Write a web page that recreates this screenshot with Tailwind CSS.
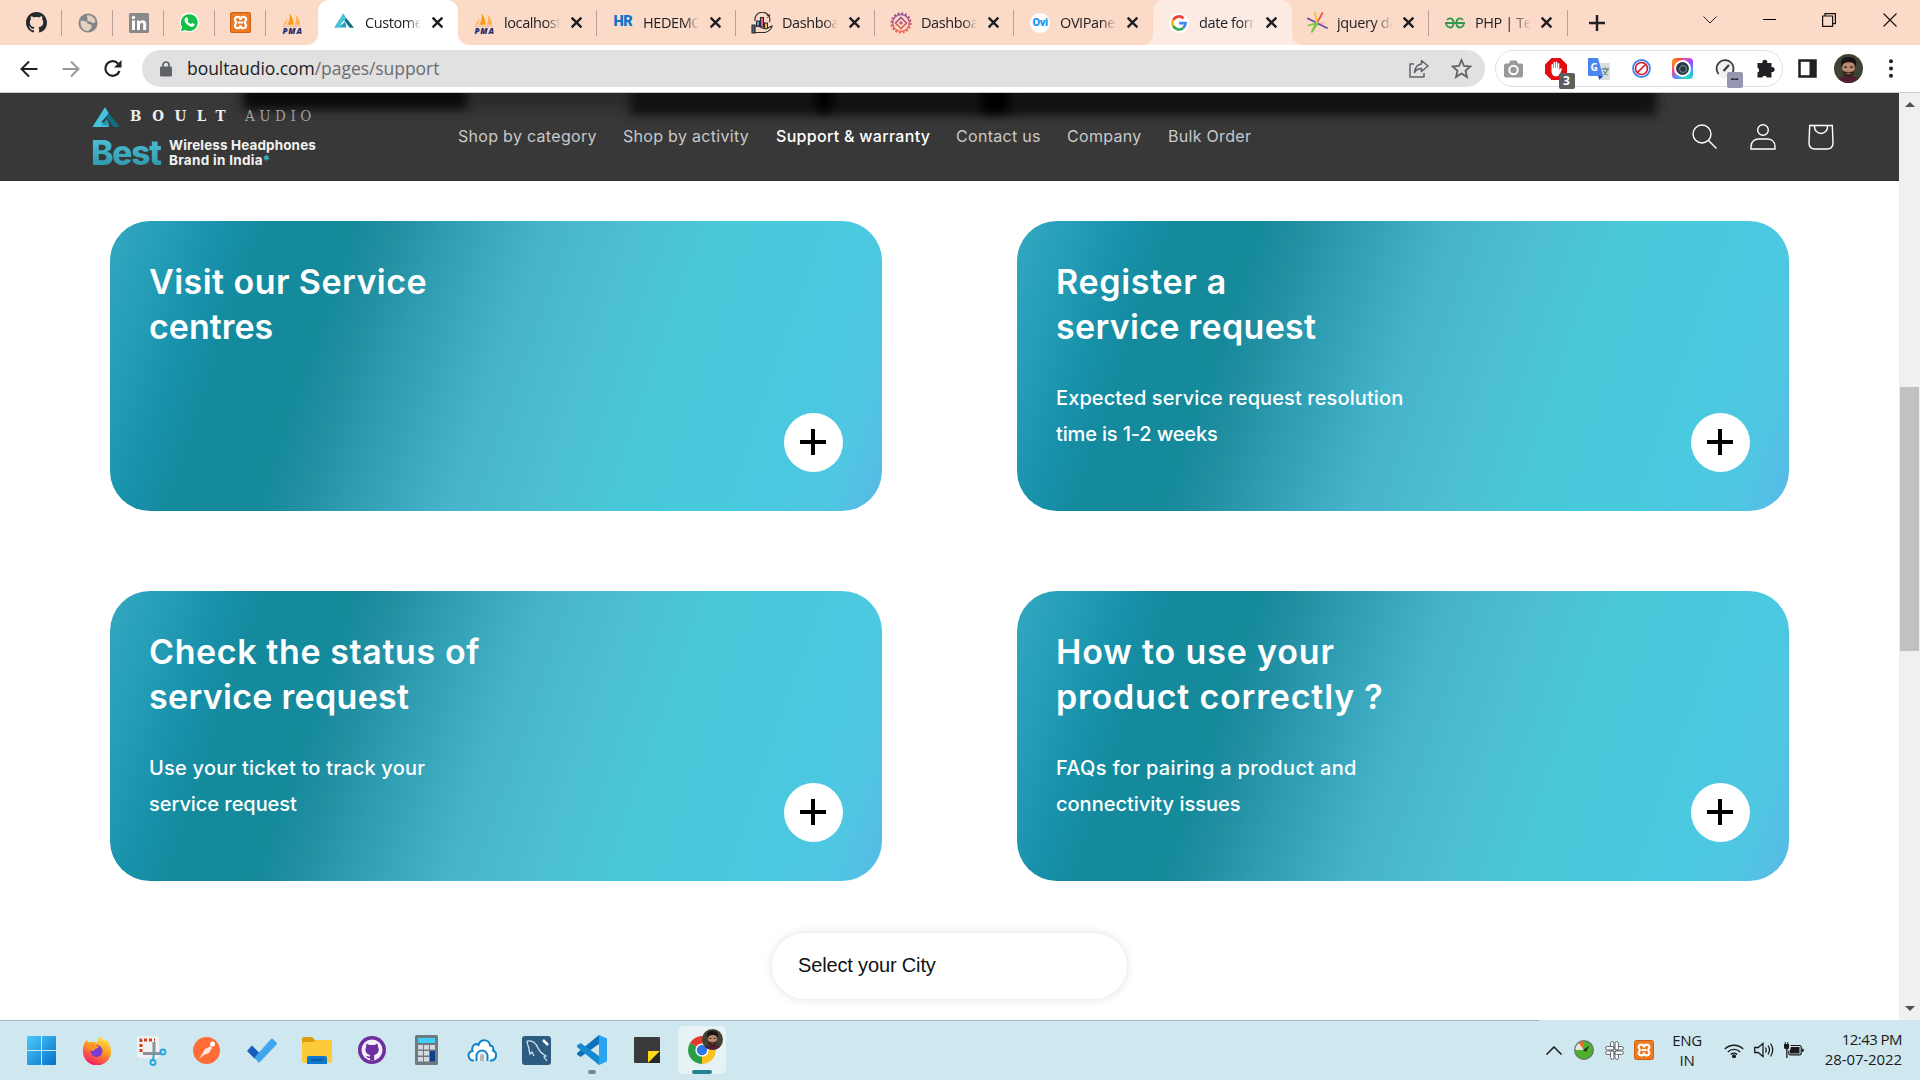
<!DOCTYPE html>
<html lang="en">
<head>
<meta charset="utf-8">
<title>Customer Support</title>
<script src="https://cdn.jsdelivr.net/npm/@tailwindcss/browser@4"></script>
</head>
<body class="w-[1920px] h-[1080px] overflow-hidden bg-white font-['Open_Sans',sans-serif] flex flex-col">

<svg class="absolute size-0">
  <symbol id="x" viewBox="0 0 12 12"><path d="M1.5 1.5l9 9M10.5 1.5l-9 9" stroke="#1c1d20" stroke-width="2.2" fill="none"/></symbol>
  <symbol id="gh" viewBox="0 0 16 16"><path fill-rule="evenodd" d="M8 0C3.58 0 0 3.58 0 8c0 3.54 2.29 6.53 5.47 7.59.4.07.55-.17.55-.38 0-.19-.01-.82-.01-1.49-2.01.37-2.53-.49-2.69-.94-.09-.23-.48-.94-.82-1.13-.28-.15-.68-.52-.01-.53.63-.01 1.08.58 1.23.82.72 1.21 1.87.87 2.33.66.07-.52.28-.87.51-1.07-1.78-.2-3.64-.89-3.64-3.95 0-.87.31-1.59.82-2.15-.08-.2-.36-1.02.08-2.12 0 0 .67-.21 2.2.82.64-.18 1.32-.27 2-.27s1.36.09 2 .27c1.53-1.04 2.2-.82 2.2-.82.44 1.1.16 1.92.08 2.12.51.56.82 1.27.82 2.15 0 3.07-1.87 3.75-3.65 3.95.29.25.54.73.54 1.48 0 1.07-.01 1.93-.01 2.2 0 .21.15.46.55.38A8 8 0 0 0 16 8c0-4.42-3.58-8-8-8z"/></symbol>
  <symbol id="xampp" viewBox="0 0 20 20"><rect x=".5" y=".5" width="19" height="19" rx="2" fill="#ef7a24" stroke="#cf5f17"/><path d="M10 10H7.500M10 10h2.500M10 7.500C10 5.500 9 4.600 7.300 4.600 5.500 4.600 4.500 5.800 4.700 7.300 4.900 8.600 5.800 9 5.800 10s-.9 1.400-1.100 2.700c-.2 1.500.8 2.700 2.600 2.700S10 14.500 10 12.500M10 7.500c0-2 1-2.900 2.700-2.900 1.800 0 2.800 1.200 2.600 2.700-.2 1.300-1.100 1.700-1.100 2.700s.9 1.400 1.100 2.700c.2 1.500-.8 2.700-2.600 2.700S10 14.500 10 12.500" fill="none" stroke="#fff" stroke-width="2.100"/></symbol>
  <symbol id="pma" viewBox="0 0 24 24"><path d="M7 14C9 10 10 6 9.500 2c3 3 4.500 8 4 12z" fill="#f99b1c"/><path d="M15 14c2-4 2-8 1-11 3 3 5 7 5 11z" fill="#fbb04c"/><path d="M2 14c2-2 4-5 4.500-8 1 3 .5 6-1 8z" fill="#fbb868"/><path d="M2 15.500h19" stroke="#e9b184" stroke-width="1"/><text x="12" y="23.500" text-anchor="middle" font-family="Open Sans" font-weight="800" font-style="italic" font-size="8.800" fill="#272b63" textLength="21">PMA</text></symbol>
  <symbol id="delta" viewBox="0 0 30 22"><path d="M14 0L0 22h18.500L16 17H9.500l7.500-8.500L18 7z" fill="#45c3da"/><path d="M18 7l12 15h-6.500L15.500 11z" fill="#0c7285"/><path d="M10 20l6-7 3 7z" fill="#2796ab"/></symbol>
  <symbol id="face" viewBox="0 0 30 30"><clipPath id="fc"><circle cx="15" cy="15" r="15"/></clipPath><g clip-path="url(#fc)"><path d="M0 0h30v30H0z" fill="#3e4433"/><path d="M2 30c1-6 7-7 13-7s12 1 13 7z" fill="#541f34"/><ellipse cx="15" cy="15" rx="6.500" ry="8.800" fill="#bd8b70"/><path d="M7.500 13C6 3 11 3 16 3c6 0 8 4 6.500 10-1-3-3-4.500-7-4.500S9 10 7.500 13z" fill="#1b1413"/><path d="M8.500 16c1 2 3 2.500 6.500 2.500s5.500-.5 6.500-2.500c0 6-3 8.500-6.500 8.500S8.500 22 8.500 16z" fill="#3a251e"/><path d="M12.500 20q2.500-1 5 0-2.500 2-5 0z" fill="#b67569"/><path d="M10.500 13.500h3M16.500 13.500h3" stroke="#26150f" stroke-width="1.200"/></g></symbol>
  <symbol id="plus" viewBox="0 0 26 26"><path d="M13 0v26M0 13h26" stroke="#000" stroke-width="4"/></symbol>
</svg>

<!-- Tab strip -->
<div class="h-[45px] bg-[#fcdac8] flex shrink-0 text-[14.5px] tracking-[-0.4px] text-[#202124]">
  <div class="flex pl-[11px] w-[318px]">
    <div class="w-[51px] flex items-center justify-center relative"><svg class="size-[21px] fill-[#24292e]"><use href="#gh"/></svg><i class="absolute right-0 w-px h-[26px] bg-[#b3a097]"></i></div>
    <div class="w-[51px] flex items-center justify-center relative"><svg class="size-[20px]" viewBox="0 0 20 20"><circle cx="10" cy="10" r="9.500" fill="#828486"/><path d="M2.500 8c2.500-.5 4 .500 5.500.500s.5 2 3 2.500 3.500 1.500 2.500 3.500-2.500 3.500-4 3.500C5 18 2 13 2.500 8zM9 2.500c3-1 6 1 8 4 .8 2 .3 3.500-1.500 3.500s-2-1.500-4-1.500-3-1-2-2.500-1.500-1.500-.5-3.500z" fill="#e4cfc3"/></svg><i class="absolute right-0 w-px h-[26px] bg-[#b3a097]"></i></div>
    <div class="w-[51px] flex items-center justify-center relative"><svg class="size-[20px]" viewBox="0 0 20 20"><rect width="20" height="20" rx="1.500" fill="#87898b"/><path d="M3 7.500h3V17H3zM8 7.500h2.800V9c.6-1 1.600-1.700 3-1.700 2.500 0 3.400 1.600 3.400 4.200V17h-3v-5c0-1.300-.3-2.200-1.500-2.200-1.300 0-1.700 1-1.700 2.200v5H8z" fill="#fff"/><circle cx="4.500" cy="4.500" r="1.700" fill="#fff"/></svg><i class="absolute right-0 w-px h-[26px] bg-[#b3a097]"></i></div>
    <div class="w-[51px] flex items-center justify-center relative"><svg class="size-[21px]" viewBox="0 0 21 21"><path d="M.5 20.500l1.500-5.200A9.800 9.800 0 1 1 6 19z" fill="#fff"/><path d="M1.800 19.200l1.300-4.200a8.400 8.400 0 1 1 3 2.900z" fill="#11c044"/><path d="M7.200 5.300c.6-.3 1-.2 1.300.5l.7 1.600c.1.500-.9 1.300-.7 1.700.8 1.500 1.800 2.400 3.400 3 .5.100 1-1.200 1.500-1l2 1c.4.300.1 1.500-.4 2-2 1.500-4 .6-6-.8-1.700-1.300-3.400-3.300-3.500-5.200 0-1.200.7-2.300 1.700-2.800z" fill="#fff"/></svg><i class="absolute right-0 w-px h-[26px] bg-[#b3a097]"></i></div>
    <div class="w-[51px] flex items-center justify-center relative"><svg class="size-[21px]"><use href="#xampp"/></svg><i class="absolute right-0 w-px h-[26px] bg-[#b3a097]"></i></div>
    <div class="w-[51px] flex items-center justify-center"><svg class="size-[22px]"><use href="#pma"/></svg></div>
  </div>
  <div class="w-[140px] bg-white rounded-t-[11px] relative flex items-center pl-4">
    <svg class="absolute -left-[11px] bottom-0 size-[11px]" viewBox="0 0 11 11"><path d="M11 0v11H0A11 11 0 0 0 11 0z" fill="#fff"/></svg>
    <svg class="absolute -right-[11px] bottom-0 size-[11px]" viewBox="0 0 11 11"><path d="M0 0v11h11A11 11 0 0 1 0 0z" fill="#fff"/></svg>
    <svg class="w-5 h-[15px] -mt-1"><use href="#delta"/></svg>
    <span class="ml-[11px] w-[56px] overflow-hidden whitespace-nowrap mask-r-from-75%">Customer</span>
    <svg class="size-[13px] ml-[10px]"><use href="#x"/></svg>
  </div>
  <div class="w-[139px] flex items-center pl-[15px] relative"><svg class="size-[22px]"><use href="#pma"/></svg><span class="ml-[9px] w-[56px] overflow-hidden whitespace-nowrap mask-r-from-75%">localhost</span><svg class="size-[13px] ml-[10px]"><use href="#x"/></svg><i class="absolute right-0 w-px h-[26px] bg-[#b3a097]"></i></div>
  <div class="w-[139px] flex items-center pl-[15px] relative"><b class="w-[22px] text-center font-['Roboto'] font-black text-[14.500px] text-[#0b74cc] leading-none">HR</b><span class="ml-[9px] w-[56px] overflow-hidden whitespace-nowrap mask-r-from-75%">HEDEMO</span><svg class="size-[13px] ml-[10px]"><use href="#x"/></svg><i class="absolute right-0 w-px h-[26px] bg-[#b3a097]"></i></div>
  <div class="w-[139px] flex items-center pl-[15px] relative"><svg class="size-[22px]" viewBox="0 0 22 22" fill="none" stroke="#2b2b33" stroke-width="1.100"><path d="M4 9a7.500 7.500 0 1 1 14.500 1"/><path d="M1 13h3v8H1z" fill="#4d6e8d"/><path d="M5.500 9h3v5h-3z" fill="#5aa7ef"/><path d="M9.500 5.500h3V15h-3z" fill="#f2637b"/><path d="M13.500 11h3v6h-3z" fill="#f8c33c"/><path d="M4 15c3-2 5 0 7 1l4 1 6-3c0 3-4 6-7 6.500H4z" fill="#f8d9c4"/><path d="M16 2.500l3 3M19 2.500l-3 3"/></svg><span class="ml-[9px] w-[56px] overflow-hidden whitespace-nowrap mask-r-from-75%">Dashboard</span><svg class="size-[13px] ml-[10px]"><use href="#x"/></svg><i class="absolute right-0 w-px h-[26px] bg-[#b3a097]"></i></div>
  <div class="w-[139px] flex items-center pl-[15px] relative"><svg class="size-[22px]" viewBox="0 0 22 22" fill="none"><defs><linearGradient id="dg" x2="0" y2="1"><stop stop-color="#94499a"/><stop offset="1" stop-color="#f0634b"/></linearGradient></defs><circle cx="11" cy="11" r="9.500" stroke="url(#dg)" stroke-width="2.200" stroke-dasharray="2 1.730"/><circle cx="11" cy="11" r="8.300" stroke="url(#dg)" stroke-width="1.300"/><path d="M11 5.500l5.500 5.500-5.500 5.500L5.500 11z" stroke="url(#dg)" stroke-width="1.600"/><path d="M11 9l2 2-2 2-2-2z" fill="url(#dg)"/></svg><span class="ml-[9px] w-[56px] overflow-hidden whitespace-nowrap mask-r-from-75%">Dashboard</span><svg class="size-[13px] ml-[10px]"><use href="#x"/></svg><i class="absolute right-0 w-px h-[26px] bg-[#b3a097]"></i></div>
  <div class="w-[139px] flex items-center pl-[16px]"><b class="size-5 rounded-full bg-white flex items-center justify-center font-['Roboto'] font-black text-[11px] text-[#1a98f5] leading-none">Ovi</b><span class="ml-[10px] w-[56px] overflow-hidden whitespace-nowrap mask-r-from-75%">OVIPanel</span><svg class="size-[13px] ml-[10px]"><use href="#x"/></svg></div>
  <div class="w-[139px] bg-[#fcebe3] rounded-t-[11px] relative flex items-center pl-[16px]">
    <svg class="absolute -left-[11px] bottom-0 size-[11px]" viewBox="0 0 11 11"><path d="M11 0v11H0A11 11 0 0 0 11 0z" fill="#fcebe3"/></svg>
    <svg class="absolute -right-[11px] bottom-0 size-[11px]" viewBox="0 0 11 11"><path d="M0 0v11h11A11 11 0 0 1 0 0z" fill="#fcebe3"/></svg>
    <svg class="size-[20px]" viewBox="0 0 20 20" fill="none" stroke-width="2.700"><circle cx="10" cy="10" r="10" fill="#fff"/><path d="M14.600 5.400A6.500 6.500 0 0 0 4.200 7" stroke="#ea4335"/><path d="M4.200 7a6.500 6.500 0 0 0 0 6" stroke="#fbbc05"/><path d="M4.200 13a6.500 6.500 0 0 0 10 1.900" stroke="#34a853"/><path d="M14.200 14.900A6.500 6.500 0 0 0 16.500 10.200H10.200" stroke="#4285f4"/></svg>
    <span class="ml-[10px] w-[56px] overflow-hidden whitespace-nowrap mask-r-from-75%">date format</span><svg class="size-[13px] ml-[10px]"><use href="#x"/></svg>
  </div>
  <div class="w-[137px] flex items-center pl-[14px] relative"><svg class="size-[23px]" viewBox="0 0 23 23" stroke-width="1.800" stroke-linecap="round" fill="none"><path d="M9 11L2 7.500" stroke="#6a4c9c"/><path d="M10.500 9.500L9 2" stroke="#f4c235"/><path d="M12 10l4.500-8" stroke="#f0554a"/><path d="M11 12h8" stroke="#f8b9b0" stroke-width="1.300"/><path d="M12 12.500l9 4.500" stroke="#6152a3"/><path d="M2.500 14.500l7-2-4 9 6-9" stroke="#7ac943"/></svg><span class="ml-[8px] w-[56px] overflow-hidden whitespace-nowrap mask-r-from-65%">jquery date</span><svg class="size-[13px] ml-[9px]"><use href="#x"/></svg><i class="absolute right-0 w-px h-[26px] bg-[#b3a097]"></i></div>
  <div class="w-[139px] flex items-center pl-[16px] relative"><svg class="w-5 h-3" viewBox="0 0 20 12" fill="none" stroke="#2f9a4c" stroke-width="1.800"><path d="M0 6h20M2 3Q4 .8 6.300 1.700T8.600 6 6.300 10.300 1.500 8.500V6M18 3Q16 .8 13.700 1.700T11.400 6t2.300 4.300 4.800-1.800V6"/></svg><span class="ml-[10px] w-[56px] overflow-hidden whitespace-nowrap mask-r-from-65%">PHP | Ternary</span><svg class="size-[13px] ml-[9px]"><use href="#x"/></svg><i class="absolute right-0 w-px h-[26px] bg-[#b3a097]"></i></div>
  <div class="flex-1 flex items-center pl-[21px]">
    <svg class="size-4" viewBox="0 0 16 16"><path d="M8 0v16M0 8h16" stroke="#202124" stroke-width="2.500"/></svg>
    <svg class="w-[14px] h-[8px] ml-[98px] -mt-[5px]" viewBox="0 0 14 8"><path d="M.5.5L7 7 13.500.5" stroke="#222" fill="none"/></svg>
    <i class="w-[13px] h-px bg-black ml-[46px] -mt-[6px]"></i>
    <svg class="size-[14px] ml-[46px] -mt-[5px]" viewBox="0 0 14 14" fill="none" stroke="#111" stroke-width="1.200"><path d="M.6 3h10v10.400H.6zM3 3V.600h10.400v10H10.600"/></svg>
    <svg class="size-[14px] ml-[47px] -mt-[5px]" viewBox="0 0 14 14"><path d="M.5.5l13 13M13.500.5l-13 13" stroke="#111" stroke-width="1.100"/></svg>
  </div>
</div>

<!-- Toolbar -->
<div class="h-12 shrink-0 border-b border-[#c8c8c8] flex items-center pl-5">
  <svg class="size-[18px]" viewBox="0 0 18 18" fill="none" stroke="#202124" stroke-width="2"><path d="M17.500 9H2M9 1.500L1.500 9 9 16.500"/></svg>
  <svg class="size-[18px] ml-6" viewBox="0 0 18 18" fill="none" stroke="#98999b" stroke-width="2"><path d="M.5 9H16M9 1.500L16.500 9 9 16.500"/></svg>
  <svg class="size-[19px] ml-[23px]" viewBox="0 0 19 19" fill="none" stroke="#202124" stroke-width="2.200"><path d="M16.500 12A7.300 7.300 0 1 1 15 4.500"/><path d="M18.500 1v7.500H11z" fill="#202124" stroke="none"/></svg>
  <div class="ml-[20px] w-[1343px] h-[37px] rounded-full bg-[#e1e1e1] flex items-center pl-[18px]">
    <svg class="w-3 h-4" viewBox="0 0 12 16"><rect y="5.500" width="12" height="10" rx="1.300" fill="#5f6368"/><path d="M3 6V4a3 3 0 0 1 6 0v2" fill="none" stroke="#5f6368" stroke-width="1.700"/></svg>
    <span class="ml-[15px] text-[17.500px] tracking-[-0.050px] text-[#202124] leading-none">boultaudio.com<span class="text-[#6a6c6f]">/pages/support</span></span>
    <svg class="w-5 h-[19px] ml-auto" viewBox="0 0 20 19" fill="none" stroke="#5f6368" stroke-width="1.500" stroke-linejoin="round"><path d="M5 5H1v13h14v-4"/><path d="M12.500 1.500L19 7l-6.500 5.500V9.500C9 9.500 7 11 5.500 13.500 6 9 8 5.500 12.500 5z"/></svg>
    <svg class="size-[21px] ml-[22px] mr-[13px]" viewBox="0 0 21 21"><path d="M10.500 2l2.500 6 6.300.5-4.800 4.200 1.500 6.300-5.500-3.400L5 19l1.500-6.300L1.700 8.500 8 8z" fill="none" stroke="#5f6368" stroke-width="1.800"/></svg>
  </div>
  <div class="ml-[10px] w-[288px] h-[37px] rounded-full border border-[#dfe1e3] flex items-center justify-between pl-2 pr-[7px]">
    <svg class="w-[19px] h-[18px]" viewBox="0 0 19 18"><path d="M2 3.500h3L6.500.5h6L14 3.500h3q2 0 2 2v10q0 2-2 2H2q-2 0-2-2v-10q0-2 2-2z" fill="#9a9a9a"/><circle cx="9.500" cy="10" r="4.200" fill="#9a9a9a" stroke="#fff" stroke-width="2"/></svg>
    <span class="relative flex"><svg class="size-[22px]" viewBox="0 0 22 22"><path d="M6.500 0h9L22 6.500v9L15.500 22h-9L0 15.500v-9z" fill="#e30c13"/><path d="M6.500 13V6.500q1-1 1.500 0V10h.5V4.500q1-1 1.600 0V10h.5V4q1-1 1.600 0v6h.5V5.500q1-1 1.600 0v6.500l1-1.500q1-.8 1.700.2L15 16q-1.500 2.500-4 2.500-4.500-.5-4.500-5.500z" fill="#fff"/></svg><b class="absolute left-[14px] top-[15px] w-[16px] h-[16px] rounded-[2px] bg-[#5e5e5e] text-white text-[12px] leading-[16px] text-center">3</b></span>
    <svg class="size-[22px]" viewBox="0 0 22 22"><path d="M8 5h14v17H13z" fill="#dadce0"/><path d="M0 0h10l5 18H1.500Q0 18 0 16.500z" fill="#4a86ee"/><path d="M10 18h5l-3.500 4z" fill="#2953b5"/><text x="2.500" y="12.500" font-family="Open Sans" font-weight="700" font-size="10" fill="#fff">G</text><path d="M14 11h7M17 9.500V11M19.500 11q-1 4-4 6M15.500 13q1.500 3 4 4" stroke="#6b8a8f" stroke-width="1.300" fill="none"/></svg>
    <svg class="size-[19px]" viewBox="0 0 19 19"><circle cx="9.500" cy="9.500" r="8.500" fill="#fff" stroke="#4285ea" stroke-width="1.800"/><circle cx="9.500" cy="9.500" r="6" fill="none" stroke="#d61c2b" stroke-width="1.700"/><path d="M5.500 13.500l8-8" stroke="#d61c2b" stroke-width="1.700"/></svg>
    <span class="size-[21px] rounded-[4px] bg-[conic-gradient(from_0deg,#ff4f93,#9b4dff,#35a7ff,#29e0b8,#44a1ff,#ff3d8b,#ff8a1e,#ff2d55)] flex items-center justify-center"><i class="size-[17px] rounded-full bg-[#2c3944] border-2 border-white flex items-center justify-center"><i class="size-[8px] rounded-full border border-[#7d8d99]"></i></i></span>
    <span class="relative flex"><svg class="size-[20px]" viewBox="0 0 20 20" fill="none" stroke="#3a3a3a"><circle cx="10" cy="10" r="9.500" fill="#f1f1f1" stroke="none"/><path d="M3.500 15A8.500 8.500 0 1 1 17 14.500" stroke-width="1.800"/><path d="M8.500 12L14 6" stroke-width="2.200"/></svg><b class="absolute left-[12px] top-[13px] w-[16px] h-[16px] rounded-[2px] bg-[#9596b0] text-[#222] text-[12px] leading-[14px] text-center">--</b></span>
    <svg class="size-[19px]" viewBox="0 0 19 19"><path d="M2 4h4.500a2.500 2.500 0 1 1 4.700 0H15.500v4.200a2.500 2.500 0 1 1 0 4.800V18.500h-4.500a2.500 2.500 0 0 0-4.800 0H1.500V13.500a2.500 2.500 0 0 0 0-4.700V4z" fill="#202124"/></svg>
  </div>
  <svg class="size-[19px] ml-[15px]" viewBox="0 0 19 19"><path d="M1.500 1.500h16v16h-16z" fill="none" stroke="#202124" stroke-width="2.500"/><path d="M11.500 1h6v17h-6z" fill="#202124"/></svg>
  <svg class="size-[29px] ml-[17px]"><use href="#face"/></svg>
  <svg class="w-1 h-[19px] ml-[26px]" viewBox="0 0 4 19" fill="#202124"><circle cx="2" cy="2.200" r="2"/><circle cx="2" cy="9.500" r="2"/><circle cx="2" cy="16.800" r="2"/></svg>
</div>

<!-- Page -->
<div class="flex h-[927px] shrink-0">
  <div class="w-[1899px] flex flex-col">
    <header class="h-[88px] shrink-0 bg-[#383838] relative overflow-hidden flex items-center border-b border-[#2e2e2e]">
      <i class="absolute left-[240px] -top-[20px] w-[1416px] h-[36px] bg-[#2b2b2b] blur-[7px]"></i>
      <i class="absolute left-[244px] -top-[20px] w-[223px] h-[36px] bg-[#0b0b0b] blur-[5px]"></i>
      <i class="absolute left-[630px] -top-[20px] w-[1026px] h-[42px] bg-[#121212] blur-[5px]"></i>
      <i class="absolute left-[816px] -top-[20px] w-[16px] h-[38px] bg-black blur-[5px]"></i>
      <i class="absolute left-[982px] -top-[20px] w-[26px] h-[40px] bg-black blur-[5px]"></i>
      <div class="relative ml-[91px] w-[230px] flex flex-col pt-[3px]">
        <div class="flex items-center h-[21px]">
          <svg class="w-[30px] h-[20px]"><use href="#delta"/></svg>
          <span class="ml-[9px] w-[115px] font-['DejaVu_Serif_Condensed','DejaVu_Serif',serif] font-bold text-[15px] tracking-[10.500px] text-[#eee] leading-none whitespace-nowrap">BOULT</span>
          <span class="font-['DejaVu_Serif_Condensed','DejaVu_Serif',serif] text-[15px] tracking-[4.500px] text-[#a0a0a0] leading-none whitespace-nowrap">AUDIO</span>
        </div>
        <div class="flex items-center mt-[9px] h-[34px]">
          <b class="w-[72px] font-['Inter',sans-serif] font-extrabold text-[34px] tracking-[-1.500px] leading-[34px] text-transparent bg-linear-to-b from-[#4fc3d8] to-[#2b94a8] bg-clip-text whitespace-nowrap">Best</b>
          <b class="ml-[6px] font-['Inter',sans-serif] text-[13.500px] leading-[15px] text-[#f2f2f2] whitespace-nowrap"><span class="tracking-[0.120px]">Wireless Headphones</span><br><span class="tracking-[0.300px]">Brand in India</span><span class="text-[#3fb8cf]">*</span></b>
        </div>
      </div>
      <nav class="relative ml-[137px] -mt-[2px] flex font-['Inter',sans-serif] text-[16px] tracking-[0.300px] text-[#c9c9c9] whitespace-nowrap">
        <a class="w-[165px]">Shop by category</a>
        <a class="w-[153px]">Shop by activity</a>
        <a class="w-[180px] text-white font-medium">Support &amp; warranty</a>
        <a class="w-[111px]">Contact us</a>
        <a class="w-[101px]">Company</a>
        <a class="w-[101px]">Bulk Order</a>
      </nav>
      <div class="relative ml-auto mr-[65px] flex gap-[32px]">
        <svg class="size-[26px]" viewBox="0 0 26 26" fill="none" stroke="#fff" stroke-width="1.400"><circle cx="10" cy="10" r="9"/><path d="M16.500 16.500l8 8"/></svg>
        <svg class="size-[26px]" viewBox="0 0 26 26" fill="none" stroke="#fff" stroke-width="1.400"><circle cx="13" cy="6" r="5.300"/><path d="M1 25v-2.500C1 17 5 15 8.500 15h9c3.500 0 7.500 2 7.500 7.500V25z"/></svg>
        <svg class="size-[26px]" viewBox="0 0 26 26" fill="none" stroke="#fff" stroke-width="1.400"><path d="M1.700 1.500h22.600l.7 17c0 4-2 6.500-6 6.500H7c-4 0-6-2.500-6-6.500z"/><path d="M6.500 1.500v1.500a6.500 6.500 0 0 0 13 0V1.500"/></svg>
      </div>
    </header>

    <main class="flex-1 pt-10 flex flex-col">
      <div class="ml-[110px] grid grid-cols-[772px_772px] gap-x-[135px] gap-y-[80px] font-['Inter',sans-serif] text-white">
        <section class="h-[290px] rounded-[40px] pl-[39px] pt-[39px] relative bg-[linear-gradient(109deg,#33a7c0_0%,#279fb9_6%,#1891ab_13%,#148a9d_18%,#148a9b_28%,#238fa3_33%,#31a0b5_40%,#46b4cb_50%,#4dbfd2_60%,#48c9d9_71%,#4ac9e0_86%,#50c6e3_94%,#59b8e6_100%)]">
          <h2 class="text-[34px] leading-[44.500px] font-semibold"><span class="tracking-[0.450px]">Visit our Service</span><br>centres</h2>
          <button class="absolute right-[39px] bottom-[39px] size-[59px] rounded-full bg-white flex items-center justify-center pb-[2px] pr-px"><svg class="size-[26px]"><use href="#plus"/></svg></button>
        </section>
        <section class="h-[290px] rounded-[40px] pl-[39px] pt-[39px] relative bg-[linear-gradient(109deg,#33a7c0_0%,#279fb9_6%,#1891ab_13%,#148a9d_18%,#148a9b_28%,#238fa3_33%,#31a0b5_40%,#46b4cb_50%,#4dbfd2_60%,#48c9d9_71%,#4ac9e0_86%,#50c6e3_94%,#59b8e6_100%)]">
          <h2 class="text-[34px] leading-[44.500px] font-semibold"><span class="tracking-[0.700px]">Register a</span><br><span class="tracking-[0.300px]">service request</span></h2>
          <p class="mt-[31px] text-[20px] leading-[36px] font-medium"><span class="tracking-[0.100px]">Expected service request resolution</span><br><span class="tracking-[-0.150px]">time is 1-2 weeks</span></p>
          <button class="absolute right-[39px] bottom-[39px] size-[59px] rounded-full bg-white flex items-center justify-center pb-[2px] pr-px"><svg class="size-[26px]"><use href="#plus"/></svg></button>
        </section>
        <section class="h-[290px] rounded-[40px] pl-[39px] pt-[39px] relative bg-[linear-gradient(109deg,#33a7c0_0%,#279fb9_6%,#1891ab_13%,#148a9d_18%,#148a9b_28%,#238fa3_33%,#31a0b5_40%,#46b4cb_50%,#4dbfd2_60%,#48c9d9_71%,#4ac9e0_86%,#50c6e3_94%,#59b8e6_100%)]">
          <h2 class="text-[34px] leading-[44.500px] font-semibold"><span class="tracking-[0.600px]">Check the status of</span><br><span class="tracking-[0.300px]">service request</span></h2>
          <p class="mt-[31px] text-[20px] leading-[36px] font-medium"><span class="tracking-[0.220px]">Use your ticket to track your</span><br><span class="tracking-[-0.050px]">service request</span></p>
          <button class="absolute right-[39px] bottom-[39px] size-[59px] rounded-full bg-white flex items-center justify-center pb-[2px] pr-px"><svg class="size-[26px]"><use href="#plus"/></svg></button>
        </section>
        <section class="h-[290px] rounded-[40px] pl-[39px] pt-[39px] relative bg-[linear-gradient(109deg,#33a7c0_0%,#279fb9_6%,#1891ab_13%,#148a9d_18%,#148a9b_28%,#238fa3_33%,#31a0b5_40%,#46b4cb_50%,#4dbfd2_60%,#48c9d9_71%,#4ac9e0_86%,#50c6e3_94%,#59b8e6_100%)]">
          <h2 class="text-[34px] leading-[44.500px] font-semibold"><span class="tracking-[0.850px]">How to use your</span><br><span class="tracking-[0.800px]">product correctly ?</span></h2>
          <p class="mt-[31px] text-[20px] leading-[36px] font-medium"><span class="tracking-[0.320px]">FAQs for pairing a product and</span><br>connectivity issues</p>
          <button class="absolute right-[39px] bottom-[39px] size-[59px] rounded-full bg-white flex items-center justify-center pb-[2px] pr-px"><svg class="size-[26px]"><use href="#plus"/></svg></button>
        </section>
      </div>
      <div class="ml-[772px] mt-[52px] w-[355px] h-[66px] rounded-full bg-white shadow-[0_0_10px_rgba(0,0,0,0.13)] flex items-center pl-[26px] pb-[2px] font-['Liberation_Sans',sans-serif] text-[20px] tracking-[-0.150px] text-[#111]">Select your City</div>
    </main>
  </div>
  <div class="w-[21px] bg-[#f0f0f0] flex flex-col items-center justify-between py-[9px] relative">
    <svg class="w-[10px] h-[5px]" viewBox="0 0 10 5"><path d="M0 5l5-5 5 5z" fill="#505050"/></svg>
    <i class="absolute left-[1px] top-[294px] w-[19px] h-[264px] bg-[#c1c1c1]"></i>
    <svg class="w-[10px] h-[5px]" viewBox="0 0 10 5"><path d="M0 0l5 5 5-5z" fill="#505050"/></svg>
  </div>
</div>

<!-- Taskbar -->
<div class="h-[60px] bg-[#cfe7ee] flex items-center relative pl-[14px] text-[#1b1b1b]">
  <i class="absolute left-0 top-0 w-[1539px] h-px bg-[#a3b4ba]"></i>
  <div class="grid grid-cols-[repeat(13,55px)] place-items-center">
    <svg class="size-[29px]" viewBox="0 0 29 29"><defs><linearGradient id="wg" x2="1" y2="1"><stop stop-color="#4cc9fb"/><stop offset="1" stop-color="#0571cc"/></linearGradient></defs><path d="M0 1q0-1 1-1h13v14H0zM15 0h13q1 0 1 1v13H15zM0 15h14v14H1q-1 0-1-1zM15 15h14v13q0 1-1 1H15z" fill="url(#wg)"/></svg>
    <svg class="size-[29px]" viewBox="0 0 29 29"><defs><linearGradient id="fg" x1=".8" x2=".3" y2="1"><stop stop-color="#fff04a"/><stop offset=".45" stop-color="#ff9a1f"/><stop offset="1" stop-color="#f5156c"/></linearGradient></defs><path d="M18 0c2 3 4 4 6 5l1-1c2 3 4 7 4 11a14 14 0 0 1-28 1C.5 11 2 7 5 3.500l1 3q2-1 4-.5 4-.5 5 1 1-4 3-7z" fill="url(#fg)"/><circle cx="14.500" cy="15" r="6" fill="#7a3bd8"/><path d="M5 9c3-2 6-1 8 0 2 1 4 1 4 2-1 2-5 1-5 4-3 0-7-2-7-6z" fill="#ff9422"/></svg>
    <svg class="size-[31px]" viewBox="0 0 31 31" fill="none"><rect x="1" y="1" width="22" height="22" rx="2" fill="#eef1f3"/><path d="M5 17V5h14" stroke="#d2401a" stroke-width="3" stroke-dasharray="3 2"/><path d="M18 7v12M7 18.500h18" stroke="#8a9299" stroke-width="3"/><circle cx="27" cy="17" r="2.500" stroke="#21a5e2" stroke-width="1.800"/><circle cx="17" cy="27.500" r="2.500" stroke="#21a5e2" stroke-width="1.800"/><path d="M18 18.500l-1 6.500" stroke="#21a5e2" stroke-width="1.800"/></svg>
    <svg class="size-[27px]" viewBox="0 0 27 27"><circle cx="13.500" cy="13.500" r="13.500" fill="#ff6c37"/><circle cx="19.500" cy="7" r="2.500" fill="#fff"/><path d="M18 9l-6 3-3 5-3 5 5-4 5-2 3-5z" fill="#ffe5db"/></svg>
    <svg class="w-[30px] h-[25px]" viewBox="0 0 30 25"><path d="M0 13l5-5.500 8 8-5 5.500z" fill="#185abd"/><path d="M7.500 19.500L24 1q1-1 2 0l3.500 3.500q1 1 0 2L13 24q-1 1-2 0z" fill="#41a5ee"/></svg>
    <svg class="w-[30px] h-[27px]" viewBox="0 0 30 27"><path d="M0 2q0-2 2-2h8l3 3h15q2 0 2 2v5H0z" fill="#dd9d0b"/><path d="M0 7q0-2 2-2h9l3-2h14q2 0 2 2v19q0 2-2 2H2q-2 0-2-2z" fill="#fccb3a"/><path d="M5 21q0-2 2-2h16q2 0 2 2v6H5z" fill="#0f78cd"/><path d="M9 23h12" stroke="#0a4f91" stroke-width="1.300"/></svg>
    <svg class="size-[28px]" viewBox="0 0 28 28"><circle cx="14" cy="14" r="14" fill="#6e2f9e"/><circle cx="14" cy="14" r="10.500" fill="#f5effa"/><svg x="3.500" y="3.500" width="21" height="21" class="fill-[#6e2f9e]"><path d="M5 4l3 1.500h5L16 4l.7 4c1.500 3 0 6.500-4 7.500v5.500H8.500v-2.500c-2.500.5-3-1-4-2 1.500-.2 2 1 4 .5V15.500c-4-1-5.500-4.500-4-7.500z"/></svg></svg>
    <svg class="w-[23px] h-[30px]" viewBox="0 0 23 30"><rect width="23" height="30" rx="1.500" fill="#6f7981"/><path d="M3 3h17v5H3z" fill="#40d0f7"/><path d="M3 10h5v4.500H3zM9 10h5v4.500H9zM15 10h5v4.500h-5zM3 16h5v4.500H3zM9 16h5v4.500H9zM3 22h5v4.500H3zM9 22h5v4.500H9z" fill="#d3d8dc"/><path d="M15 16h5v10.500h-5z" fill="#0d4187"/></svg>
    <svg class="w-[30px] h-[23px]" viewBox="0 0 30 23" fill="none" stroke="#0f86cb" stroke-width="2"><path d="M7 21.500C0 22 0 12 5.500 12 4 6 9 4 11.500 6c2-6.500 11-6 11.500.5 3.500 0 3.500 3 3 5C31 13 30 22 23 21.500" fill="#fff"/><path d="M9.500 22v-5a5.500 5.500 0 0 1 11 0v5" fill="#e8f4fa"/><path d="M13 22v-5a2 2 0 0 1 4 0v5z" fill="#b5b5b5" stroke="none"/></svg>
    <svg class="size-[29px]" viewBox="0 0 29 29" fill="none"><rect width="29" height="29" rx="3" fill="#2c5d80"/><path d="M5 5c5-1 9 2 11 7 2 5 5 6 8 8l-2 1 3 4M5 5c0 4 2 5 2 9l1 4 2-2 2 4" stroke="#d5e5ef" stroke-width="1.200"/><path d="M21 4l5 5" stroke="#fff" stroke-width="2.500"/></svg>
    <div class="relative flex"><svg class="size-[30px]" viewBox="0 0 30 30"><path d="M22 0l8 3.500v23L22 30z" fill="#2aa3f0"/><path d="M22 0v9L3.500 22 0 19.500v-1.500z" fill="#0b71bd"/><path d="M22 30v-9L3.500 8 0 10.500V12z" fill="#1688d2"/></svg><i class="absolute left-[11px] top-[35px] w-2 h-1 rounded-full bg-[#76858b]"></i></div>
    <svg class="size-[26px]" viewBox="0 0 26 26"><path d="M0 1q0-1 1-1h24q1 0 1 1v13L14 26H1q-1 0-1-1z" fill="#3a3a3a"/><path d="M26 14L14 26V14z" fill="#fcd914"/><path d="M26 14v12H14z" fill="#262626"/></svg>
    <div class="size-[48px] rounded-[5px] bg-[#e7f2f7] relative flex items-center justify-center"><svg class="size-[28px]" viewBox="0 0 28 28"><path d="M14 14L1.900 7A14 14 0 0 1 26.100 7z" fill="#e33b2e"/><path d="M14 14L26.100 7A14 14 0 0 1 14 28z" fill="#fcc31e"/><path d="M14 14v14A14 14 0 0 1 1.900 7z" fill="#2a9d48"/><path d="M14 7h12.100L20 17.500l-6 10.500 4-10z" fill="#fcc31e"/><circle cx="14" cy="14" r="6.600" fill="#fff"/><circle cx="14" cy="14" r="5.200" fill="#2f76e8"/></svg><svg class="absolute left-6 top-[3px] size-[21px]"><use href="#face"/></svg><i class="absolute left-[14px] bottom-0 w-5 h-1 rounded-full bg-[#258394]"></i></div>
  </div>
  <div class="ml-auto flex items-center mr-[18px]">
    <svg class="w-4 h-[9px]" viewBox="0 0 16 9"><path d="M.5 8.500L8 1l7.500 7.500" fill="none" stroke="#1b1b1b" stroke-width="1.500"/></svg>
    <svg class="size-5 ml-3" viewBox="0 0 20 20"><circle cx="10" cy="10" r="9.300" fill="#4fb02c" stroke="#6a7a6c" stroke-width="1.400"/><path d="M10 10H1.500A8.500 8.500 0 0 1 5 3z" fill="#e6e6e6"/><path d="M10 10L5 3a8.500 8.500 0 0 1 4-1.500z" fill="#f46a2a"/><path d="M15.500 5.500L12 12l-3-2z" fill="#27332c"/></svg>
    <svg class="size-[19px] ml-[11px]" viewBox="0 0 19 19" fill="#fff" stroke="#606669" stroke-width="1"><rect x="5.500" y=".6" width="3.400" height="9" rx="1.700"/><rect x="10" y="9.500" width="3.400" height="9" rx="1.700"/><rect x="9.400" y="5.500" width="9" height="3.400" rx="1.700"/><rect x=".6" y="10" width="9" height="3.400" rx="1.700"/><rect x=".6" y="5.500" width="8.300" height="3.400" rx="1.700"/><rect x="10" y=".6" width="3.400" height="8.300" rx="1.700"/><rect x="10" y="10" width="8.400" height="3.400" rx="1.700"/><rect x="5.500" y="10" width="3.400" height="8.400" rx="1.700"/></svg>
    <svg class="size-5 ml-[10px]"><use href="#xampp"/></svg>
    <div class="ml-[18px] w-[30px] text-center text-[15px] leading-[20px] tracking-[-0.300px]">ENG<br>IN</div>
    <svg class="w-5 h-[15px] ml-[22px]" viewBox="0 0 20 15" fill="none" stroke="#1b1b1b" stroke-width="1.400"><path d="M.8 6a13 13 0 0 1 18.400 0M3.800 8.900a8.800 8.800 0 0 1 12.400 0M6.800 11.500a4.600 4.600 0 0 1 6.400 0"/><circle cx="10" cy="13.200" r="1.300" fill="#1b1b1b"/></svg>
    <svg class="w-5 h-[16px] ml-[10px]" viewBox="0 0 20 16" fill="none" stroke="#1b1b1b" stroke-width="1.300"><path d="M.7 5.500h3.500L9 1.500v13l-4.800-4H.7zM11.500 5.500q1.500 2.500 0 5M14 3.500q3 4.500 0 9M16.500 1.500q4.500 6.500 0 13"/></svg>
    <svg class="w-5 h-[16px] ml-[10px]" viewBox="0 0 20 16"><path d="M0 2h5v3.500q0 1.500-1.500 1.700V16h-1.300V7.200Q0 7 0 5.500zM.8 0h1v2h-1zM3.300 0h1v2h-1z" fill="#1b1b1b"/><path d="M6.500 3.500h9q1.700 0 1.700 1.700v6q0 1.700-1.700 1.700h-9q-1.700 0-1.700-1.700V8.500" fill="none" stroke="#1b1b1b" stroke-width="1.200"/><path d="M7 5h8.500v6.500H6V8zM18 6.500q2 0 2 1.700T18 10z" fill="#1b1b1b"/></svg>
    <div class="ml-[20px] text-right text-[15px] leading-[20px] w-[78px] flex flex-col items-end whitespace-nowrap -mt-[2px]"><span class="tracking-[-0.550px]">12:43 PM</span><span class="tracking-[-0.100px]">28-07-2022</span></div>
  </div>
</div>
</body>
</html>
